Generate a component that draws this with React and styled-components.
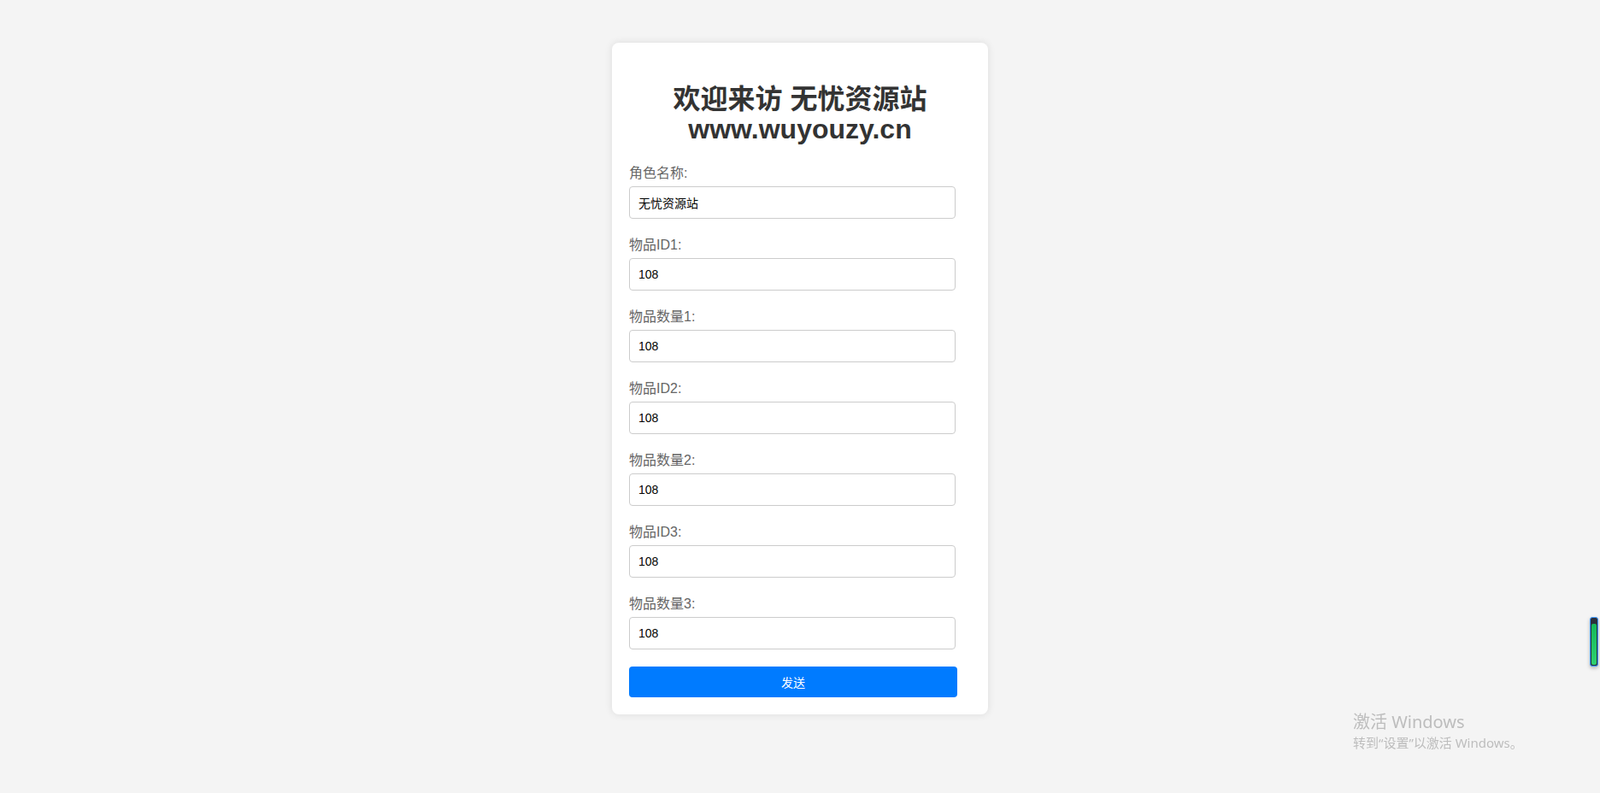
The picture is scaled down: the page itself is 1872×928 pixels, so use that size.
import React from 'react';
import styled, { createGlobalStyle } from 'styled-components';

const GlobalStyle = createGlobalStyle`
  html, body {
    margin: 0;
    padding: 0;
    background: #f4f4f4;
    font-family: "Liberation Sans", Arial, "Noto Sans CJK SC", sans-serif;
  }
`;

const Page = styled.div`
  min-height: 100vh;
  display: flex;
  justify-content: center;
  align-items: flex-start;
  padding-top: 50px;
  box-sizing: border-box;
`;

const Card = styled.form`
  width: 440px;
  box-sizing: border-box;
  padding: 20px;
  background: #fff;
  border-radius: 8px;
  box-shadow: 0 0 10px rgba(0, 0, 0, 0.1);
`;

const Title = styled.h1`
  margin: 29px 0 24px;
  font-size: 32px;
  line-height: 35px;
  font-weight: bold;
  color: #333;
  text-align: center;
`;

const Group = styled.div`
  margin-bottom: ${(p) => (p.last ? '20px' : '21px')};
`;

const Label = styled.label`
  display: block;
  height: 20px;
  margin-bottom: 5px;
  font-size: 16px;
  line-height: 20px;
  color: #666;
`;

const Input = styled.input`
  display: block;
  width: 382px;
  height: 38px;
  box-sizing: border-box;
  padding: 10px;
  border: 1px solid #ccc;
  border-radius: 4px;
  font-family: "Liberation Sans", Arial, "Noto Sans CJK SC", sans-serif;
  font-size: 14px;
  color: #000;
  outline: none;
`;

const SendButton = styled.button`
  display: block;
  width: 384px;
  height: 36px;
  padding: 0;
  border: none;
  border-radius: 4px;
  background: #007bff;
  color: #fff;
  font-family: "Liberation Sans", Arial, "Noto Sans CJK SC", sans-serif;
  font-size: 14px;
  cursor: pointer;
`;

const Watermark = styled.div`
  position: fixed;
  left: 1583px;
  top: 832px;
  color: #bdbdbd;
  font-family: "Noto Sans", "Noto Sans CJK SC", sans-serif;
  pointer-events: none;
`;

const WatermarkTitle = styled.div`
  font-size: 20px;
  line-height: 26px;
`;

const WatermarkHint = styled.div`
  margin-top: 1px;
  font-size: 15px;
  line-height: 20px;
`;

const SideWidget = styled.div`
  position: fixed;
  left: 1860px;
  top: 722px;
  width: 8px;
  height: 56px;
  border: 1px solid #3d9bff;
  border-radius: 3px;
  background: #2b2f3b;
  box-shadow: 0 2px 4px rgba(0, 0, 0, 0.25);
  &::after {
    content: '';
    position: absolute;
    left: 1px;
    right: 1px;
    top: 7px;
    bottom: 1px;
    border-radius: 2px;
    background: linear-gradient(#15b85a, #2fd06f);
  }
`;

const fields = [
  { label: '角色名称:', value: '无忧资源站' },
  { label: '物品ID1:', value: '108' },
  { label: '物品数量1:', value: '108' },
  { label: '物品ID2:', value: '108' },
  { label: '物品数量2:', value: '108' },
  { label: '物品ID3:', value: '108' },
  { label: '物品数量3:', value: '108' },
];

export default function App() {
  return (
    <>
      <GlobalStyle />
      <Page>
        <Card onSubmit={(e) => e.preventDefault()}>
          <Title>
            欢迎来访 无忧资源站
            <br />
            www.wuyouzy.cn
          </Title>
          {fields.map((f, i) => (
            <Group key={i} last={i === fields.length - 1}>
              <Label>{f.label}</Label>
              <Input type="text" defaultValue={f.value} />
            </Group>
          ))}
          <SendButton type="submit">发送</SendButton>
        </Card>
      </Page>
      <SideWidget />
      <Watermark>
        <WatermarkTitle>激活 Windows</WatermarkTitle>
        <WatermarkHint>转到“设置”以激活 Windows。</WatermarkHint>
      </Watermark>
    </>
  );
}
